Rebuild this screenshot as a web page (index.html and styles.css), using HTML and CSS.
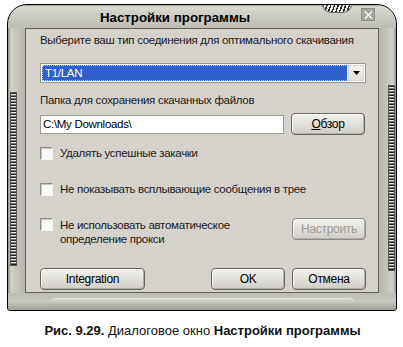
FILE: index.html
```html
<!DOCTYPE html>
<html lang="ru">
<head>
<meta charset="utf-8">
<title>Настройки программы</title>
<link rel="stylesheet" href="styles.css">
</head>
<body>
<div class="window">
  <div class="titlebar">
    <span class="title">Настройки программы</span>
    <span class="grip"></span>
    <span class="close"><svg width="11" height="10" viewBox="0 0 11 10"><path d="M2 1.5 L9 8.5 M9 1.5 L2 8.5" stroke="#fff" stroke-width="1.2" fill="none"/></svg></span>
  </div>
  <div class="middle">
    <div class="side side-left"><div class="texture tex-left"></div></div>
    <div class="panel">
      <div class="label label-first">Выберите ваш тип соединения для оптимального скачивания</div>
      <div class="combo">
        <div class="combo-value"><span>T1/LAN</span></div>
        <div class="combo-btn"><svg width="7" height="4" viewBox="0 0 7 4"><path d="M0 0 H7 L3.5 4 Z" fill="#000"/></svg></div>
      </div>
      <div class="label label-second">Папка для сохранения скачанных файлов</div>
      <div class="row row-path">
        <div class="input">C:\My Downloads\</div>
        <div class="btn"><span class="ul">О</span>бзор</div>
      </div>
      <div class="check check-1"><span class="box"></span><span>Удалять успешные закачки</span></div>
      <div class="check check-2"><span class="box"></span><span>Не показывать всплывающие сообщения в трее</span></div>
      <div class="row row-proxy">
        <div class="check check-3"><span class="box"></span><span>Не использовать автоматическое<br>определение прокси</span></div>
        <div class="btn btn-disabled">Настроить</div>
      </div>
      <div class="row row-bottom">
        <div class="btn btn-wide">Integration</div>
        <div class="btn-group">
          <div class="btn">OK</div>
          <div class="btn">Отмена</div>
        </div>
      </div>
    </div>
    <div class="side side-right"><div class="texture tex-right"></div></div>
  </div>
  <div class="bottom"><div class="bottom-bar"></div></div>
</div>
<p class="caption"><b>Рис. 9.29.</b> Диалоговое окно <b>Настройки программы</b></p>
</body>
</html>
```
FILE: styles.css
```css
html, body {
  margin: 0;
  padding: 0;
  background: #fff;
}
body {
  width: 403px;
  height: 347px;
  overflow: hidden;
  font-family: "Liberation Sans", Arial, sans-serif;
}
.window {
  box-sizing: border-box;
  margin: 4px 0 0 7px;
  width: 390px;
  height: 307px;
  border: 1px solid #000;
  border-radius: 20px 20px 3px 3px;
  background:
    linear-gradient(to right, #8e8e86 0, #d2d2ca 3px, #c2c2ba 10px, #b8b8b0 16px, #c6c6be 50%, #b8b8b0 calc(100% - 16px), #c2c2ba calc(100% - 10px), #d2d2ca calc(100% - 3px), #8e8e86 100%);
  display: flex;
  flex-direction: column;
  position: relative;
  overflow: hidden;
}
.titlebar {
  height: 23px;
  flex: none;
  position: relative;
  display: flex;
  align-items: center;
  justify-content: center;
  background: linear-gradient(#9c9c94 0, #dcdcd4 2px, #cfcfc7 8px, #bdbdb5 23px);
  border-radius: 19px 19px 0 0;
}
.title {
  font-weight: bold;
  font-size: 13.3px;
  color: #000;
  margin-right: 54px;
  margin-top: 1px;
}
.grip {
  position: absolute;
  left: 314px;
  top: -1px;
  width: 28px;
  height: 8px;
  border-radius: 0 0 10px 10px;
  background: repeating-linear-gradient(110deg, #2a2a2a 0 1.5px, #e8e8e0 1.5px 3.5px);
  border: 1px solid #6a6a64;
  border-top: none;
}
.close {
  position: absolute;
  left: 353px;
  top: 3px;
  width: 12px;
  height: 11px;
  background: #a8a8a2;
  border: 1px solid #8e8e88;
  display: flex;
  align-items: center;
  justify-content: center;
}
.middle {
  display: flex;
  height: 265px;
  flex: none;
}
.side {
  width: 17px;
  flex: none;
  display: flex;
}
.texture {
  width: 5px;
  border: 1px solid #555;
  background: repeating-linear-gradient(to bottom, #222 0 1px, #e6e6de 1px 2px, #777 2px 3px);
}
.tex-left {
  margin: 64px 0 0 2px;
  height: 172px;
}
.tex-right {
  margin: 57px 0 0 9px;
  height: 184px;
}
.panel {
  flex: 1;
  min-width: 0;
  overflow: hidden;
  border: 1px solid #5e5e58;
  background: #d5d2cb;
  padding: 4px 12px 0 14px;
  display: flex;
  flex-direction: column;
  font-size: 11.5px;
  letter-spacing: -0.3px;
  color: #202020;
}
.label {
  line-height: 14px;
  height: 14px;
  white-space: nowrap;
}
.label-second {
  margin-top: 10px;
}
.combo {
  margin-top: 16px;
  height: 20px;
  box-sizing: border-box;
  border: 1px solid #9a9a94;
  background: #fff;
  padding: 1px;
  display: flex;
  gap: 1px;
}
.combo-value {
  flex: 1;
  background: #2f5fcb;
  color: #fff;
  display: flex;
  align-items: center;
  padding-left: 1px;
}
.combo-value span {
  outline: 1px dotted #c9d6f0;
  outline-offset: 0;
  line-height: 14px;
  padding: 0 2px;
  flex: 1;
}
.combo-btn {
  width: 16px;
  background: linear-gradient(#f6f4ee, #e0ded6);
  border: 1px solid #d8d6ce;
  box-sizing: border-box;
  display: flex;
  align-items: center;
  justify-content: center;
}
.row {
  display: flex;
  align-items: center;
  gap: 7px;
}
.row-path {
  margin-top: 6px;
}
.input {
  width: 244px;
  height: 19px;
  box-sizing: border-box;
  border: 1px solid #9a9a94;
  background: #fff;
  color: #000;
  line-height: 17px;
  padding-left: 2px;
}
.btn {
  width: 74px;
  height: 22px;
  box-sizing: border-box;
  border: 1px solid #66665f;
  border-radius: 4px;
  background: linear-gradient(#f3f2ee, #dedcd6 60%, #cfcdc6);
  box-shadow: inset -1px -1px 0 #b0aea8, inset 1px 1px 0 #fbfbf9;
  display: flex;
  align-items: center;
  justify-content: center;
  color: #000;
  font-size: 12px;
  flex: none;
}
.ul {
  text-decoration: underline;
}
.btn-disabled {
  color: #9a9a94;
  border-color: #8a8a84;
}
.check {
  display: flex;
  align-items: center;
  gap: 7px;
  line-height: 14px;
  white-space: nowrap;
}
.box {
  width: 13px;
  height: 13px;
  box-sizing: border-box;
  flex: none;
  border: 1px solid;
  border-color: #8e8e88 #f4f4f2 #f4f4f2 #8e8e88;
  background: #f8f8f6;
  box-shadow: inset 1px 1px 0 #c8c8c2;
}
.check-1 {
  margin-top: 11px;
}
.check-2 {
  margin-top: 22px;
}
.row-proxy {
  margin-top: 22px;
  justify-content: space-between;
  align-items: flex-start;
}
.check-3 {
  align-items: flex-start;
}
.row-bottom {
  margin-top: 22px;
  justify-content: space-between;
}
.btn-wide {
  width: 105px;
}
.btn-group {
  display: flex;
  gap: 7px;
}
.bottom {
  flex: 1;
  display: flex;
  justify-content: center;
  background: linear-gradient(#bdbdb5, #c8c8c0 50%, #9e9e96);
}
.bottom-bar {
  margin-top: 5px;
  width: 305px;
  height: 8px;
  border-radius: 6px 6px 2px 2px;
  background: linear-gradient(#d8d8d0, #a8a8a0);
  border-top: 1px solid #e6e6de;
}
.caption {
  margin: 11px 0 0 0;
  text-align: center;
  font-size: 13px;
  line-height: 18px;
  color: #111;
  padding-left: 2px;
}
.caption b {
  font-weight: bold;
}
```
